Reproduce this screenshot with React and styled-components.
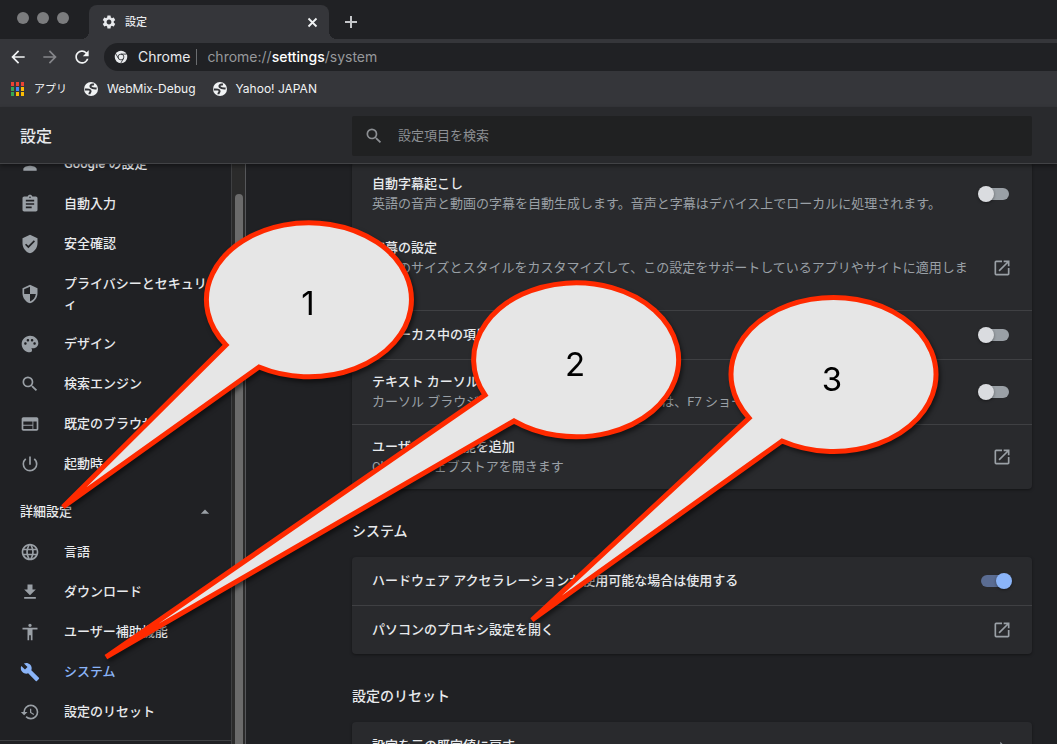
import React from "react";
import styled, { createGlobalStyle, css } from "styled-components";
import {
  MdAccessibility,
  MdArrowBack,
  MdArrowDropUp,
  MdArrowForward,
  MdArrowRight,
  MdAssignment,
  MdBuild,
  MdFileDownload,
  MdLanguage,
  MdOpenInNew,
  MdPalette,
  MdPerson,
  MdPowerSettingsNew,
  MdRefresh,
  MdRestore,
  MdSearch,
  MdSecurity,
  MdSettings,
  MdVerifiedUser,
  MdWeb,
} from "react-icons/md";

const GlobalStyle = createGlobalStyle`
  *, *::before, *::after { box-sizing: border-box; }
  body {
    margin: 0;
    background: #202124;
    color: #e8eaed;
    font: 500 13px/20px Inter, "Noto Sans CJK JP", sans-serif;
  }
  button, input { font: inherit; color: inherit; }
  button { border: 0; padding: 0; background: none; cursor: pointer; }
  a { color: inherit; text-decoration: none; }
  h1, h2, p { margin: 0; font-weight: inherit; }
  svg { display: block; flex: none; }
`;

const Window = styled.div`
  position: relative;
  display: flex;
  flex-direction: column;
  height: 100vh;
  overflow: hidden;
`;

/* Browser frame */

const TabStrip = styled.div`
  display: flex;
  align-items: flex-end;
  height: 39px;
  flex: none;
`;

const WindowControls = styled.div`
  display: flex;
  align-self: flex-start;
  gap: 8px;
  width: 89px;
  padding: 12px 0 0 17px;
`;

const Light = styled.button`
  width: 12px;
  height: 12px;
  border-radius: 50%;
  && { background: #7b7c7e; }
`;

const Tab = styled.div`
  position: relative;
  display: flex;
  align-items: center;
  gap: 8px;
  width: 240px;
  height: 34px;
  padding: 0 10px 0 12px;
  border-radius: 8px 8px 0 0;
  background: #35363a;
  font-size: 11px;

  &::before, &::after {
    content: "";
    position: absolute;
    bottom: 0;
    width: 8px;
    height: 8px;
  }
  &::before {
    right: 100%;
    background: radial-gradient(circle at 0 0, transparent 8px, #35363a 8px);
  }
  &::after {
    left: 100%;
    background: radial-gradient(circle at 100% 0, transparent 8px, #35363a 8px);
  }
`;

const TabTitle = styled.span`
  flex: 1;
`;

const NewTab = styled.button`
  margin: 0 0 9px 14px;
  color: #c4c6c9;
`;

const Toolbar = styled.div`
  display: flex;
  align-items: center;
  gap: 12px;
  height: 36px;
  flex: none;
  padding-left: 8px;
  background: #35363a;
`;

const ToolButton = styled.button`
  color: ${(p) => (p.$dim ? "#85868a" : "#f1f3f4")};
`;

const Omnibox = styled.div`
  display: flex;
  align-items: center;
  flex: 1;
  height: 28px;
  padding-left: 10px;
  border-radius: 14px 0 0 14px;
  background: #202124;
  font-size: 14px;
  font-weight: 400;
`;

const SiteName = styled.span`
  margin-left: 10px;
  padding-right: 6px;
  border-right: 1px solid #6b6d70;
  line-height: 16px;
`;

const Address = styled.span`
  margin-left: 10px;
  color: #96989b;

  b { font-weight: 500; color: #fff; }
`;

const Bookmarks = styled.nav`
  display: flex;
  align-items: center;
  gap: 16px;
  height: 32px;
  flex: none;
  padding: 0 0 4px 10px;
  background: #35363a;
`;

const Bookmark = styled.a`
  display: flex;
  align-items: center;
  gap: ${(p) => (p.$apps ? 9 : 8)}px;
  font-size: ${(p) => (p.$apps ? 11 : 12)}px;
  font-weight: 400;
  color: #f1f3f4;
`;

/* Settings page */

const Header = styled.header`
  position: relative;
  z-index: 1;
  display: grid;
  grid-template-columns: 352px minmax(0, 680px);
  align-items: center;
  height: 57px;
  flex: none;
  padding: 1px 25px 0 0;
  border-bottom: 1px solid #424346;
  background: #292a2d;
  box-shadow: 0 2px 4px rgba(0, 0, 0, 0.4);
`;

const PageTitle = styled.h1`
  padding-left: 20px;
  font-size: 16px;
`;

const SearchField = styled.label`
  display: flex;
  align-items: center;
  gap: 14px;
  height: 40px;
  padding: 0 12px;
  border-radius: 2px;
  background: #202122;
  color: #8c8f93;
  font-weight: 400;
`;

const SearchInput = styled.input`
  flex: 1;
  min-width: 0;
  padding: 0 0 2px;
  border: 0;
  outline: 0;
  background: none;

  &::placeholder { color: #8c8f93; opacity: 1; }
`;

const Body = styled.div`
  display: flex;
  flex: 1;
  min-height: 0;
  overflow: hidden;
  font-family: Roboto, "Noto Sans CJK JP", sans-serif;
`;

const Sidebar = styled.nav`
  width: 231px;
  flex: none;
`;

const Menu = styled.div`
  margin-top: ${(p) => (p.$scrolled ? -20 : 0)}px;
`;

const MenuItem = styled.a`
  display: flex;
  align-items: center;
  gap: 24px;
  padding: 10px 4px 10px 20px;
  word-break: break-all;
  color: ${(p) => (p.$active ? "#8ab4f8" : "#e8eaed")};

  svg { color: ${(p) => (p.$active ? "#8ab4f8" : "#9aa0a6")}; }
`;

const AdvancedToggle = styled.button`
  display: flex;
  align-items: center;
  justify-content: space-between;
  width: 100%;
  height: 40px;
  margin-top: 8px;

  && { padding: 0 16px 0 20px; }
  svg { color: #9aa0a6; }
`;

const MenuRule = styled.hr`
  margin: 8px 0;
  border: 0;
  border-top: 1px solid #3f4043;
`;

const ScrollTrack = styled.div`
  width: 15px;
  flex: none;
  padding: 30px 2px 0 3px;
  border: solid #3f4042;
  border-width: 0 1px;
  border-right-color: #56575a;
  background: #2b2b2b;
`;

const ScrollThumb = styled.div`
  width: 8px;
  height: 100%;
  border-radius: 4px 4px 0 0;
  background: #6b6b6b;
`;

const Content = styled.main`
  flex: 1;
  min-width: 0;
  padding: 0 25px 0 106px;
`;

const SectionTitle = styled.h2`
  max-width: 680px;
  padding: 32px 0 16px;
  font-size: 14px;
`;

const Card = styled.section`
  max-width: 680px;
  border-radius: 4px;
  background: #292a2d;
  box-shadow: 0 1px 3px rgba(0, 0, 0, 0.4);

  ${(p) => p.$scrolled && css`margin-top: -2px;`}
`;

const Row = styled.div`
  display: flex;
  align-items: center;
  justify-content: space-between;
  gap: 24px;
  box-sizing: content-box;
  min-height: ${(p) => (p.$tall ? 40 : 48)}px;
  padding: ${(p) => (p.$tall ? 12 : 0)}px 20px;
  border-top: ${(p) => (p.$divided ? "1px solid #3f4043" : "0")};
`;

const RowText = styled.div`
  width: 596px;
  line-break: anywhere;
`;

const Detail = styled.p`
  color: #9aa0a6;
  font-weight: 400;
`;

const IconButton = styled.button`
  color: #9aa0a6;
`;

const Switch = styled.input`
  appearance: none;
  display: grid;
  align-items: center;
  flex: none;
  width: 34px;
  height: 16px;
  margin: 0;
  padding: 0 3px;
  cursor: pointer;

  &::before, &::after {
    content: "";
    grid-area: 1 / 1;
  }
  &::before {
    height: 12px;
    border-radius: 6px;
    background: #9aa0a6;
  }
  &::after {
    width: 16px;
    height: 16px;
    margin: 0 -3px;
    border-radius: 50%;
    background: #dadce0;
    box-shadow: 0 1px 3px rgba(0, 0, 0, 0.4);
  }
  &:checked::before { background: #5a6c92; }
  &:checked::after { justify-self: end; background: #8ab4f8; }
`;

/* Numbered speech bubbles that float over the window */

const Annotations = styled.svg`
  position: absolute;
  inset: 0;
  z-index: 2;
  width: 100%;
  height: 100%;
  pointer-events: none;
  filter: drop-shadow(2px 3px 2px rgba(0, 0, 0, 0.5));

  path {
    fill: #e6e6e6;
    stroke: #ff2a00;
    stroke-width: 5;
    stroke-miterlimit: 4;
  }
  text {
    fill: #000;
    font: 400 33px Inter, sans-serif;
    text-anchor: middle;
  }
`;

const ChromeLogo = () => (
  <svg width="14" height="14" viewBox="0 0 28 28" aria-hidden="true">
    <circle cx="14" cy="14" r="12.5" fill="#e8eaed" />
    <circle cx="14" cy="14" r="5.8" fill="none" stroke="#202124" strokeWidth="1.6" />
    <path d="M14 8.200H25M9 16.900L3.500 7.500M19 16.900L13.500 26.400" stroke="#202124" strokeWidth="1.6" />
  </svg>
);

const GlobeIcon = () => (
  <svg width="16" height="16" viewBox="0 0 16 16" aria-hidden="true">
    <circle cx="8" cy="8" r="7" fill="#f1f3f4" />
    <path
      d="M11 3.600C8 3 6.600 4.800 8 6.200S11.500 7.400 13.600 7.600M1.800 8.600C5 8.200 7.800 8.600 7.600 10.200C7.400 11.600 6.400 11.800 6.400 13.200"
      fill="none"
      stroke="#35363a"
      strokeWidth="2"
    />
  </svg>
);

const APP_COLORS = [
  "#ea4335", "#ea4335", "#ea4335",
  "#34a853", "#4285f4", "#fbbc04",
  "#34a853", "#fbbc04", "#fbbc04",
];

const AppsIcon = () => (
  <svg width="15" height="15" aria-hidden="true">
    {APP_COLORS.map((color, i) => (
      <rect key={i} x={1 + (i % 3) * 5} y={Math.floor(i / 3) * 5} width="3" height="4" fill={color} />
    ))}
  </svg>
);

const BASIC_MENU = [
  [MdPerson, "Google の設定"],
  [MdAssignment, "自動入力"],
  [MdVerifiedUser, "安全確認"],
  [MdSecurity, "プライバシーとセキュリティ"],
  [MdPalette, "デザイン"],
  [MdSearch, "検索エンジン"],
  [MdWeb, "既定のブラウザ"],
  [MdPowerSettingsNew, "起動時"],
];

const ADVANCED_MENU = [
  [MdLanguage, "言語"],
  [MdFileDownload, "ダウンロード"],
  [MdAccessibility, "ユーザー補助機能"],
  [MdBuild, "システム"],
  [MdRestore, "設定のリセット"],
];

const BUBBLES = [
  { n: 1, d: "M63 507L226 345A102.5 77 0 1 1 259 367Z", x: 308, y: 315 },
  { n: 2, d: "M106 657L485 395A102.5 77 0 1 1 514 421Z", x: 575, y: 376 },
  { n: 3, d: "M532 620L749 418A102.5 77 0 1 1 782 441Z", x: 832, y: 391 },
];

function MenuLinks({ items }) {
  return items.map(([Icon, label]) => (
    <MenuItem key={label} href="#" $active={label === "システム"}>
      <Icon size={20} />
      <span>{label}</span>
    </MenuItem>
  ));
}

function SwitchRow({ id, title, detail, on, divided }) {
  return (
    <Row $tall={Boolean(detail)} $divided={divided}>
      <RowText>
        <label htmlFor={id}>{title}</label>
        {detail && <Detail>{detail}</Detail>}
      </RowText>
      <Switch id={id} type="checkbox" role="switch" defaultChecked={on} />
    </Row>
  );
}

function LinkRow({ title, detail, divided, icon: Icon = MdOpenInNew }) {
  return (
    <Row $tall={Boolean(detail)} $divided={divided}>
      <RowText>
        {title}
        {detail && <Detail>{detail}</Detail>}
      </RowText>
      <IconButton aria-label={title}>
        <Icon size={20} />
      </IconButton>
    </Row>
  );
}

export default function App() {
  return (
    <Window>
      <GlobalStyle />
      <TabStrip>
        <WindowControls>
          <Light aria-label="閉じる" />
          <Light aria-label="最小化" />
          <Light aria-label="最大化" />
        </WindowControls>
        <Tab>
          <MdSettings size={16} />
          <TabTitle>設定</TabTitle>
          <button aria-label="タブを閉じる">
            <svg width="13" height="13" viewBox="0 0 13 13">
              <path d="M2.500 2.500l8 8M10.500 2.500l-8 8" stroke="#f1f3f4" strokeWidth="1.8" />
            </svg>
          </button>
        </Tab>
        <NewTab aria-label="新しいタブ">
          <svg width="16" height="16" viewBox="0 0 16 16">
            <path d="M8 2v12M2 8h12" stroke="currentColor" strokeWidth="2" />
          </svg>
        </NewTab>
      </TabStrip>
      <Toolbar>
        <ToolButton aria-label="戻る"><MdArrowBack size={20} /></ToolButton>
        <ToolButton aria-label="進む" $dim><MdArrowForward size={20} /></ToolButton>
        <ToolButton aria-label="再読み込み"><MdRefresh size={20} /></ToolButton>
        <Omnibox>
          <ChromeLogo />
          <SiteName>Chrome</SiteName>
          <Address>chrome://<b>settings</b>/system</Address>
        </Omnibox>
      </Toolbar>
      <Bookmarks>
        <Bookmark href="#" $apps><AppsIcon />アプリ</Bookmark>
        <Bookmark href="#"><GlobeIcon />WebMix-Debug</Bookmark>
        <Bookmark href="#"><GlobeIcon />Yahoo! JAPAN</Bookmark>
      </Bookmarks>

      <Header>
        <PageTitle>設定</PageTitle>
        <SearchField>
          <MdSearch size={20} />
          <SearchInput type="text" placeholder="設定項目を検索" aria-label="設定項目を検索" />
        </SearchField>
      </Header>
      <Body>
        <Sidebar>
          <Menu $scrolled><MenuLinks items={BASIC_MENU} /></Menu>
          <AdvancedToggle>
            詳細設定
            <MdArrowDropUp size={20} />
          </AdvancedToggle>
          <Menu><MenuLinks items={ADVANCED_MENU} /></Menu>
          <MenuRule />
        </Sidebar>
        <ScrollTrack><ScrollThumb /></ScrollTrack>
        <Content>
          <Card $scrolled>
            <SwitchRow
              id="live-caption"
              title="自動字幕起こし"
              detail="英語の音声と動画の字幕を自動生成します。音声と字幕はデバイス上でローカルに処理されます。"
            />
            <LinkRow
              title="字幕の設定"
              detail="字幕のサイズとスタイルをカスタマイズして、この設定をサポートしているアプリやサイトに適用します。"
            />
            <SwitchRow id="focus" divided title="フォーカス中の項目をすばやくハイライト表示する" />
            <SwitchRow
              id="caret"
              divided
              title="テキスト カーソルを使用してページを移動する"
              detail="カーソル ブラウジングのオンとオフの切り替えには、F7 ショートカットを使用します"
            />
            <LinkRow divided title="ユーザー補助機能を追加" detail="Chrome ウェブストアを開きます" />
          </Card>
          <SectionTitle>システム</SectionTitle>
          <Card>
            <SwitchRow id="gpu" on title="ハードウェア アクセラレーションが使用可能な場合は使用する" />
            <LinkRow divided title="パソコンのプロキシ設定を開く" />
          </Card>
          <SectionTitle>設定のリセット</SectionTitle>
          <Card>
            <LinkRow title="設定を元の既定値に戻す" icon={MdArrowRight} />
          </Card>
        </Content>
      </Body>

      <Annotations>
        {BUBBLES.map(({ n, d, x, y }) => (
          <g key={n}>
            <path d={d} />
            <text x={x} y={y}>{n}</text>
          </g>
        ))}
      </Annotations>
    </Window>
  );
}
